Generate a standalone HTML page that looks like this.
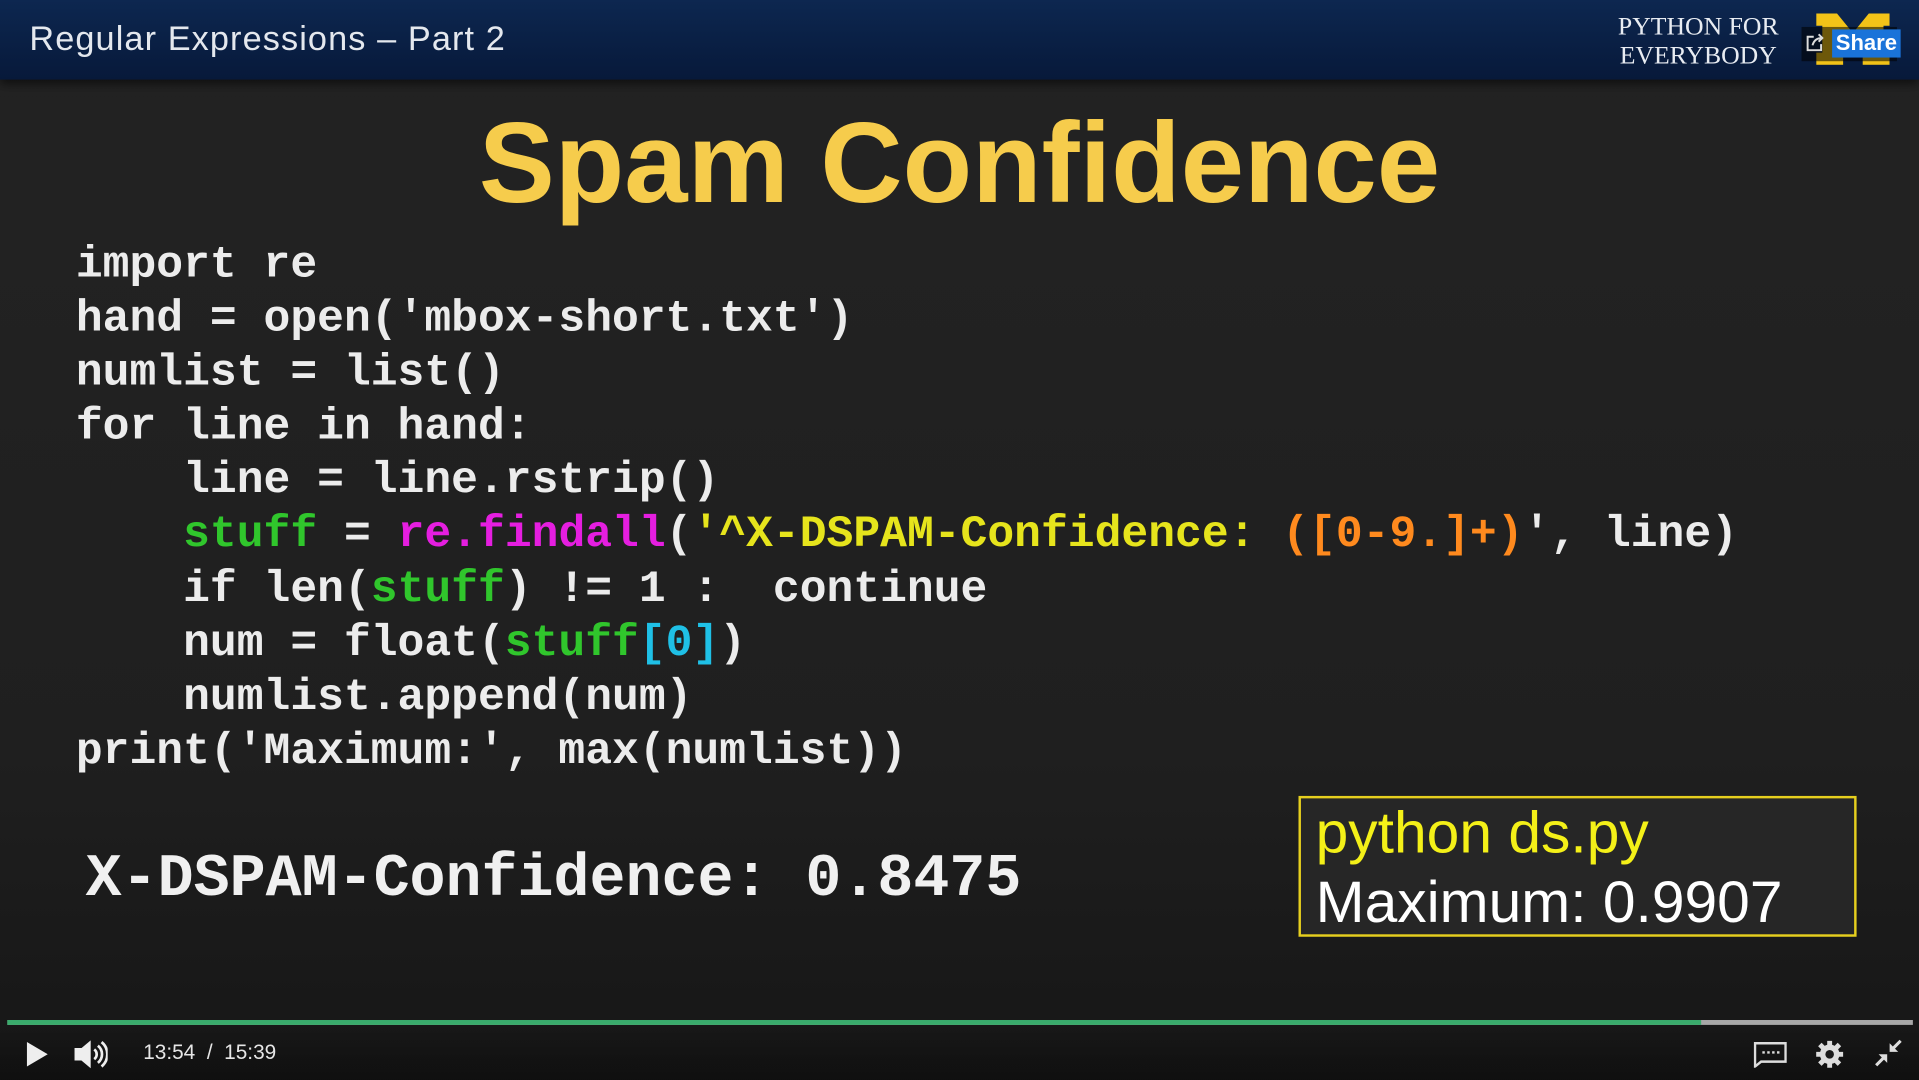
<!DOCTYPE html>
<html><head><meta charset="utf-8"><style>
html,body{margin:0;padding:0;background:#1e1e1e;overflow:hidden;width:1919px;height:1080px}
#s{position:absolute;left:0;top:0;width:1568px;height:882px;transform:scale(1.22385,1.2245);transform-origin:0 0;background:linear-gradient(#232323,#1f1f1f 70%,#161616);font-family:"Liberation Sans",sans-serif}
.top{position:absolute;left:0;top:0;width:1568px;height:65px;background:linear-gradient(#0d2750,#07193a);box-shadow:0 3px 8px rgba(0,0,0,.6)}
.tt{position:absolute;left:24px;top:16px;font-size:28px;color:#e4e8ee;letter-spacing:.9px}
.pfe{position:absolute;left:1322px;top:9px;font-family:"Liberation Serif",serif;font-size:21px;line-height:24px;color:#e8ecf2;text-align:center}
.share{position:absolute;left:1472px;top:22px;width:78px;height:28px;background:rgba(0,0,0,.55)}
.sb{position:absolute;left:1497px;top:24px;background:#1a73d9;color:#fff;font-weight:bold;font-size:18px;padding:1px 3px}
h1{position:absolute;left:0;width:1568px;top:80px;margin:0;text-align:center;font-size:93px;font-weight:bold;color:#f6cc4c}
pre{position:absolute;left:62px;top:195px;margin:0;font-family:"Liberation Mono",monospace;font-weight:bold;font-size:36.5px;line-height:44.1px;color:#ececec}
.g{color:#30c62c}.p{color:#e51ee0}.y{color:#e6e41c}.o{color:#ff8a1e}.c{color:#1fc0e6}
.x{position:absolute;left:70px;top:690px;font-family:"Liberation Mono",monospace;font-weight:bold;font-size:49px;color:#f0f0f0}
.box{position:absolute;left:1061px;top:650px;width:456px;height:115px;border:2px solid #e6cf1e;background:#262626;color:#fff;font-size:48px;line-height:57px;padding-left:12px;box-sizing:border-box}
.box span{color:#f4f018}
.pb{position:absolute;left:6px;top:833px;width:1557px;height:4px;background:#a8a8a8}
.pg{position:absolute;left:0;top:0;width:1384px;height:4px;background:#3aab6c}
.ctl{position:absolute;left:0;top:840px;width:1568px;height:42px;background:linear-gradient(rgba(0,0,0,0),rgba(0,0,0,.3))}
.time{position:absolute;left:117px;top:850px;color:#e6e6e6;font-size:17px}
</style></head><body><div id="s">
<div class="top"><div class="tt">Regular Expressions – Part 2</div>
<div class="pfe">PYTHON FOR<br>EVERYBODY</div>
<svg style="position:absolute;left:1484px;top:11px" width="60" height="42" viewBox="0 0 60 42"><path d="M0 0h17l13 16L43 0h17v10h-5v22h5v10H38V32h4V22L30 36 18 22v10h4v10H0V32h5V10H0Z" fill="#f2c318"/></svg>
<div class="share"></div>
<svg style="position:absolute;left:1475px;top:27px" width="16" height="16" viewBox="0 0 16 16" fill="none" stroke="#ddd" stroke-width="1.6"><path d="M7 3H2v11h11V9"/><path d="M6 10c1-4 4-6 8-6M11 1l3 3-3 3"/></svg>
<div class="sb">Share</div></div>
<h1>Spam Confidence</h1>
<pre>import re
hand = open('mbox-short.txt')
numlist = list()
for line in hand:
    line = line.rstrip()
    <span class="g">stuff</span> = <span class="p">re.findall</span>(<span class="y">'^X-DSPAM-Confidence: </span><span class="o">([0-9.]+)</span>', line)
    if len(<span class="g">stuff</span>) != 1 :  continue
    num = float(<span class="g">stuff</span><span class="c">[0]</span>)
    numlist.append(num)
print('Maximum:', max(numlist))</pre>
<div class="x">X-DSPAM-Confidence: 0.8475</div>
<div class="box"><span>python ds.py</span><br>Maximum: 0.9907</div>
<div class="ctl"></div>
<div class="pb"><div class="pg"></div></div>
<svg style="position:absolute;left:20px;top:850px" width="20" height="22" viewBox="0 0 20 22"><path d="M2 1L19 11L2 21Z" fill="#eee"/></svg>
<svg style="position:absolute;left:60px;top:849px" width="28" height="24" viewBox="0 0 28 24" fill="none" stroke="#eee" stroke-width="2.2"><path d="M2 8h5l6-5v18l-6-5H2Z" fill="#eee"/><path d="M17 8a5 5 0 0 1 0 8M20 5a9 9 0 0 1 0 14M23 2a13 13 0 0 1 0 20"/></svg>
<div class="time">13:54 &nbsp;/ &nbsp;15:39</div>
<svg style="position:absolute;left:1433px;top:851px" width="27" height="21" viewBox="0 0 27 21" fill="none" stroke="#ddd" stroke-width="2"><path d="M1 1h25v15H6l-5 4Z"/><path d="M7 8.5h2M11 8.5h2M15 8.5h2M19 8.5h2"/></svg>
<svg style="position:absolute;left:1483px;top:849px" width="24" height="24" viewBox="0 0 24 24"><circle cx="12" cy="12" r="8" fill="#ddd"/><g stroke="#ddd" stroke-width="4"><path d="M12 1v22M1 12h22M4 4l16 16M20 4L4 20"/></g><circle cx="12" cy="12" r="3.5" fill="#1a1a1a"/></svg>
<svg style="position:absolute;left:1532px;top:849px" width="22" height="22" viewBox="0 0 22 22" fill="#ddd" stroke="#ddd" stroke-width="2.5"><path d="M21 1l-8 8M1 21l8-8"/><path d="M12 3v7h7Z" stroke-width="0"/><path d="M10 19v-7H3Z" stroke-width="0"/></svg>
</div></body></html>
